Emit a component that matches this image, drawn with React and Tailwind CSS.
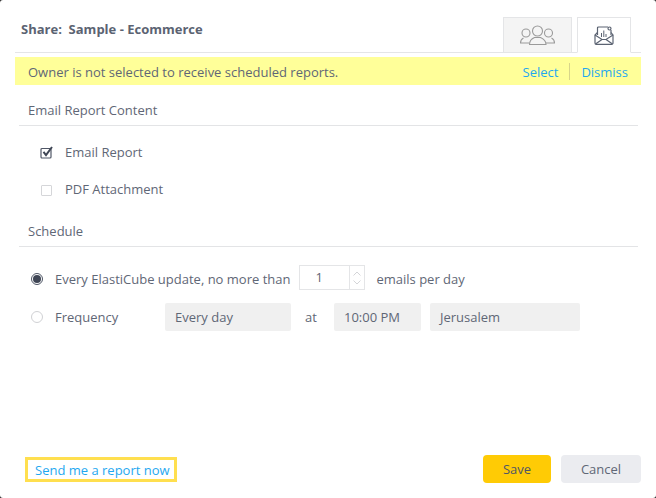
import React from "react";

const Divider = () => <div className="h-px bg-[#e3e4e6] ml-[4px] mr-[3px]" />;

function Tabs() {
  return (
    <div className="flex items-end h-[53px] border-b border-[#e4e5e7] pl-[6px] pr-[10px]">
      <div className="text-[13px] font-bold text-[#5b6372] mb-[13px] flex-1 whitespace-pre">Share:  Sample - Ecommerce</div>
      <div className="flex items-end gap-[5px] -mb-px">
        <div className="w-[69px] h-[36px] bg-[#f4f4f4] border border-[#e4e5e7] flex items-center justify-center">
          <svg width="37" height="20" viewBox="0 0 37 20" fill="none" stroke="#9a9a9a" strokeWidth="1.1">
            <circle cx="18.500" cy="6" r="5" />
            <circle cx="7" cy="8" r="4" />
            <circle cx="29.500" cy="8" r="4" />
            <path d="M10.500 19.500c0-3.500 1.500-5.500 5-7h6c3.500 1.500 5.500 3.500 5.500 7z" />
            <path d="M10 18H1.500c0-2.500 1-4 3-5M27 18h8.500c0-2.500-1-4-3-5" />
          </svg>
        </div>
        <div className="w-[54px] h-[36px] bg-white border border-[#e4e5e7] border-b-white flex items-center justify-center">
          <svg width="20" height="19" viewBox="0 0 20 19" fill="none" stroke="#5b6372" strokeWidth="1.200">
            <path d="M3.500 9V2a1 1 0 0 1 1-1h9.500M17 4v5" />
            <circle cx="15.500" cy="2.500" r="1.500" />
            <path d="M3.500 6.500L1 9v8a1.300 1.300 0 0 0 1.300 1.300h15.400A1.300 1.300 0 0 0 19 17V9l-2-2.500" />
            <path d="M1 9l7 4.500h4L19 9M1.500 18l6.500-4.500M18.500 18L12 13.500" />
            <path d="M7.500 11V7M9.800 11V4.500M12 11V8" strokeWidth="1" />
          </svg>
        </div>
      </div>
    </div>
  );
}

function Check() {
  return (
    <svg width="14" height="14" viewBox="0 0 14 14" fill="none">
      <rect x="1" y="2.500" width="10" height="9.500" rx="1" stroke="#4f5666" strokeWidth="1.200" />
      <path d="M3.500 5.800L6 9l6-8" stroke="#3f4655" strokeWidth="2" />
    </svg>
  );
}

export default function App() {
  return (
    <div className="w-[656px] h-[498px] bg-[#2a2a2a] overflow-hidden">
      <div
        className="w-full h-full bg-white rounded-[3px] flex flex-col text-[13px] text-[#5f6776] overflow-hidden"
        style={{ fontFamily: '"Open Sans", sans-serif' }}
      >
        <div className="mx-[15px] w-[626px] flex flex-col flex-1">
          <Tabs />
          <div className="mt-[4px] h-[28px] bg-[#ffff99] flex items-center pl-[13px] pr-[13px] pt-[4px]">
            <span className="flex-1">Owner is not selected to receive scheduled reports.</span>
            <span className="text-[#1fa8f0]">Select</span>
            <span className="w-px h-[17px] bg-[#d8d58a] mx-[11px] -mt-[4px]" />
            <span className="text-[#1fa8f0]">Dismiss</span>
          </div>

          <div className="pl-[13px] mt-[15px] mb-[5px] h-[20px] leading-[20px]">Email Report Content</div>
          <Divider />

          <div className="flex items-center h-[18px] mt-[18px] pl-[25px]">
            <span className="w-[25px]"><Check /></span>
            <span>Email Report</span>
          </div>
          <div className="flex items-center h-[18px] mt-[19px] pl-[25px]">
            <span className="w-[25px]"><span className="block w-[11px] h-[11px] ml-[1px] border border-[#d5d6d9] rounded-[1px]" /></span>
            <span>PDF Attachment</span>
          </div>

          <div className="pl-[13px] mt-[22px] mb-[5px] h-[20px] leading-[20px]">Schedule</div>
          <Divider />

          <div className="flex items-center h-[24px] mt-[20px] pl-[16px]">
            <span className="w-[12px] h-[12px] rounded-full border border-[#4f5666] flex items-center justify-center mr-[12px]">
              <span className="w-[8px] h-[8px] rounded-full bg-[#3f4655]" />
            </span>
            <span className="pt-[2px]">Every ElastiCube update, no more than</span>
            <div className="ml-[9px] mb-[3px] w-[66px] h-[25px] border border-[#e4e5e7] flex">
              <span className="flex-1 pl-[15px] leading-[22px]">1</span>
              <span className="w-[15px] border-l border-[#e4e5e7] flex flex-col items-center justify-center gap-[4px]">
                <svg width="8" height="5" viewBox="0 0 8 5" fill="none" stroke="#d4d5d8"><path d="M.5 4.500L4 1l3.500 3.500" /></svg>
                <svg width="8" height="5" viewBox="0 0 8 5" fill="none" stroke="#d4d5d8"><path d="M.5.500L4 4 7.500.500" /></svg>
              </span>
            </div>
            <span className="ml-[11px] pt-[2px]">emails per day</span>
          </div>

          <div className="flex items-center h-[28px] mt-[12px] pl-[16px]">
            <span className="w-[12px] h-[12px] rounded-full border border-[#d0d1d4] mr-[12px]" />
            <span className="w-[110px] pt-[2px]">Frequency</span>
            <div className="w-[126px] h-[28px] bg-[#f0f0f0] rounded-[2px] pl-[10px] leading-[28px]">Every day</div>
            <span className="w-[43px] pl-[14px] pt-[2px]">at</span>
            <div className="w-[87px] h-[28px] bg-[#f0f0f0] rounded-[2px] pl-[10px] leading-[28px]">10:00 PM</div>
            <div className="ml-[9px] w-[150px] h-[28px] bg-[#f0f0f0] rounded-[2px] pl-[10px] leading-[28px]">Jerusalem</div>
          </div>

          <div className="mt-auto mb-[15px] flex items-end">
            <div className="ml-[10px] mb-[1px] h-[25px] border-[3px] border-[#ffdf4f] pl-[7px] pr-[4px] pt-[2px] flex items-center text-[#1fa8f0]">Send me a report now</div>
            <div className="flex-1" />
            <div className="w-[68px] h-[28px] rounded-[4px] bg-[#ffcb05] flex items-center justify-center pt-[1px] text-[#4f5666]">Save</div>
            <div className="ml-[10px] w-[80px] h-[28px] rounded-[4px] bg-[#ebecf0] flex items-center justify-center pt-[1px]">Cancel</div>
          </div>
        </div>
      </div>
    </div>
  );
}
